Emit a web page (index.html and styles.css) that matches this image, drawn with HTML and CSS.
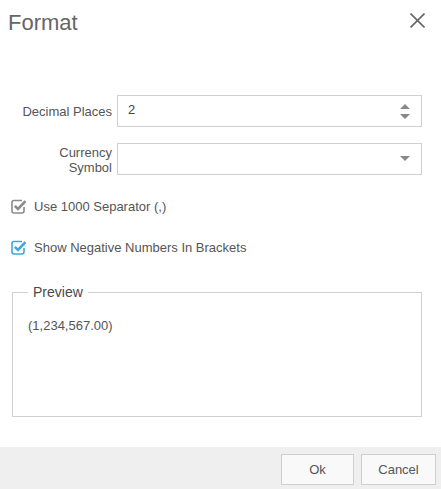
FILE: index.html
```html
<!DOCTYPE html>
<html>
<head>
<meta charset="utf-8">
<link rel="stylesheet" href="styles.css">
</head>
<body>
<div class="dialog">
  <div class="header">
    <div class="title">Format</div>
    <svg class="close" width="15" height="15" viewBox="0 0 15 15"><path d="M0.5 0.5 L14.5 14.5 M14.5 0.5 L0.5 14.5" stroke="#666" stroke-width="1.6" fill="none"/></svg>
  </div>
  <div class="form">
    <div class="row">
      <label class="label">Decimal Places</label>
      <div class="field">
        <span class="value">2</span>
        <svg class="spin" width="10" height="15" viewBox="0 0 10 15"><path d="M0 5 L5 0 L10 5 Z M0 10 L10 10 L5 15 Z" fill="#888"/></svg>
      </div>
    </div>
    <div class="row">
      <label class="label label-two">Currency Symbol</label>
      <div class="field">
        <span class="value"></span>
        <svg class="caret" width="10" height="5" viewBox="0 0 10 5"><path d="M0 0 L10 0 L5 5 Z" fill="#888"/></svg>
      </div>
    </div>
    <div class="check first">
      <svg width="16" height="16" viewBox="0 0 16 16"><path d="M11 2.5 H3 Q1 2.5 1 4.5 V13 Q1 15 3 15 H11 Q13 15 13 13 V9" stroke="#8a8a8a" stroke-width="1.6" fill="none"/><path d="M3.8 7.8 L7 11 L14.5 3.2" stroke="#8a8a8a" stroke-width="2.6" fill="none"/></svg>
      <span>Use 1000 Separator (,)</span>
    </div>
    <div class="check second">
      <svg width="16" height="16" viewBox="0 0 16 16"><path d="M11 2.5 H3 Q1 2.5 1 4.5 V13 Q1 15 3 15 H11 Q13 15 13 13 V9" stroke="#3ea7e3" stroke-width="1.6" fill="none"/><path d="M3.8 7.8 L7 11 L14.5 3.2" stroke="#3ea7e3" stroke-width="2.6" fill="none"/></svg>
      <span>Show Negative Numbers In Brackets</span>
    </div>
    <fieldset class="preview">
      <legend>Preview</legend>
      <div class="preview-text">(1,234,567.00)</div>
    </fieldset>
  </div>
  <div class="footer">
    <button class="btn ok">Ok</button>
    <button class="btn cancel">Cancel</button>
  </div>
</div>
</body>
</html>
```
FILE: styles.css
```css
html, body {
  margin: 0;
  padding: 0;
  background: #fff;
}
body {
  font-family: "Liberation Sans", Arial, sans-serif;
  font-size: 13px;
  color: #555;
}
.dialog {
  width: 441px;
  height: 489px;
  display: flex;
  flex-direction: column;
}
.header {
  display: flex;
  justify-content: space-between;
  align-items: flex-start;
  padding: 12px 16px 0 8px;
}
.title {
  font-size: 22px;
  line-height: 22px;
  color: #666;
}
.close {
  margin-top: 1px;
}
.form {
  margin-top: 61px;
  display: flex;
  flex-direction: column;
}
.row {
  display: flex;
  align-items: center;
  margin-bottom: 15px;
}
.row + .row {
  margin-bottom: 0;
}
.label {
  width: 95px;
  margin-left: 17px;
  margin-right: 5px;
  text-align: right;
  line-height: 15px;
}
.label-two {
  margin-top: 3px;
}
.field {
  width: 305px;
  height: 32px;
  box-sizing: border-box;
  border: 1px solid #d0d0d0;
  display: flex;
  align-items: center;
  padding: 0 11px 0 10px;
  color: #444;
}
.value {
  flex: 1;
  margin-top: -3px;
}
.check {
  display: flex;
  align-items: center;
  height: 16px;
  margin-left: 11px;
}
.check svg {
  margin-right: 7px;
}
.check.first {
  margin-top: 23px;
}
.check.second {
  margin-top: 25px;
}
.preview {
  margin: 30px 19px 0 12px;
  padding: 0 15px;
  border: 1px solid #d0d0d0;
  height: 132px;
  box-sizing: border-box;
}
.preview legend {
  padding: 0 5px;
  line-height: 15px;
  font-size: 14px;
  color: #4a4a4a;
}
.preview-text {
  margin-top: 18px;
  line-height: 15px;
}
.footer {
  margin-top: auto;
  background: #efefef;
  padding: 7px 5px 4px;
  display: flex;
  justify-content: flex-end;
  gap: 7px;
}
.btn {
  height: 31px;
  background: #f9f9f9;
  border: 1px solid #cfcfcf;
  font-family: "Liberation Sans", Arial, sans-serif;
  font-size: 13px;
  color: #555;
  padding: 0;
}
.ok {
  width: 73px;
}
.cancel {
  width: 75px;
}
```
